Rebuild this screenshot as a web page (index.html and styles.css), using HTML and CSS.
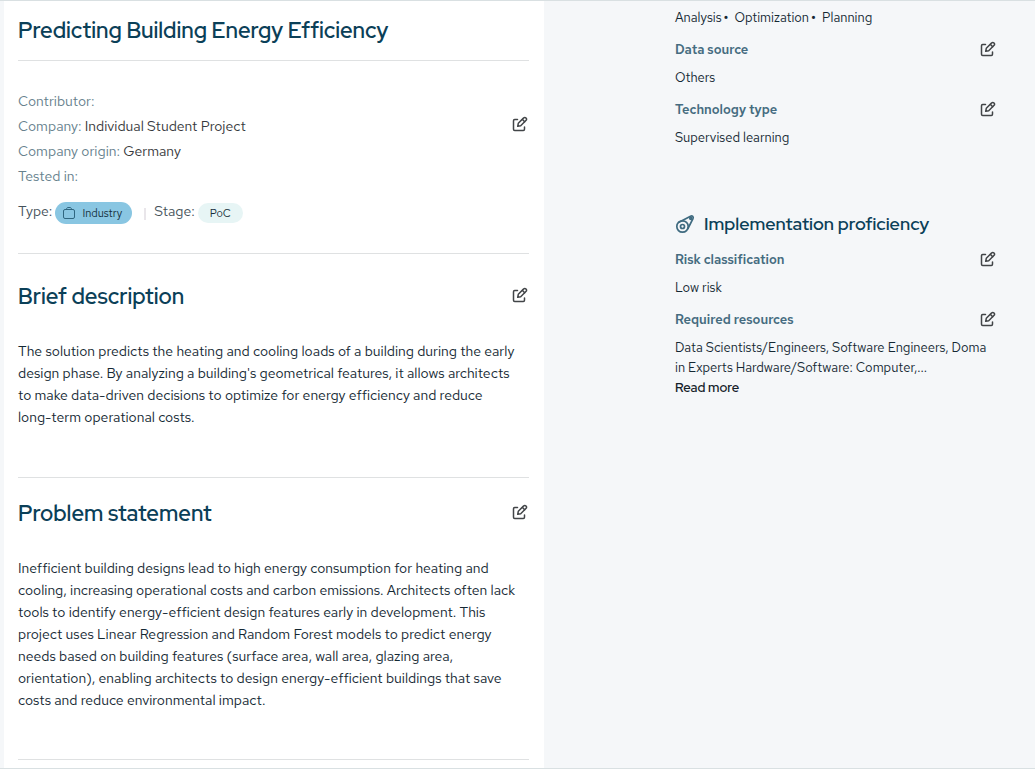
FILE: index.html
```html
<!DOCTYPE html>
<html lang="en">
<head>
<meta charset="utf-8">
<meta name="viewport" content="width=device-width, initial-scale=1">
<title>Predicting Building Energy Efficiency</title>
<link rel="stylesheet" href="styles.css">
</head>
<body>
<svg class="sprite" aria-hidden="true">
  <symbol id="edit" viewBox="0 0 16 16">
    <path d="M5.500 3.500H2.700A1.200 1.200 0 0 0 1.500 4.700v8.600a1.200 1.200 0 0 0 1.200 1.200h8.600a1.200 1.200 0 0 0 1.200-1.200V11"/>
    <path d="M5.700 10.300l.6-3L11.700 1.900a1.500 1.500 0 0 1 2.200 0l.2.2a1.500 1.500 0 0 1 0 2.200L8.700 9.700z"/>
    <path d="M10.500 3.500l2.200 2.200"/>
  </symbol>
</svg>
<div class="page">
  <main class="card">
    <header class="section title-section">
      <h1 class="heading">Predicting Building Energy Efficiency</h1>
    </header>
    <section class="section details">
      <dl class="facts">
        <div><dt>Contributor:</dt><dd></dd></div>
        <div><dt>Company:</dt> <dd>Individual Student Project</dd></div>
        <div><dt>Company origin:</dt> <dd>Germany</dd></div>
        <div><dt>Tested in:</dt><dd></dd></div>
      </dl>
      <button class="edit" type="button" aria-label="Edit details"><svg><use href="#edit"/></svg></button>
      <div class="tags">
        <span class="tag-label">Type:</span>
        <span class="pill industry"><svg class="case" viewBox="0 0 14 14" aria-hidden="true"><rect x="1.500" y="3.500" width="11" height="9" rx="1.500"/><path d="M4.500 3.500c0-2 1-2 2.500-2s2.500 0 2.500 2"/></svg>Industry</span>
        <span class="divider"></span>
        <span class="tag-label">Stage:</span>
        <span class="pill stage">PoC</span>
      </div>
    </section>
    <section class="section prose">
      <div class="bar">
        <h2 class="heading">Brief description</h2>
        <button class="edit" type="button" aria-label="Edit brief description"><svg><use href="#edit"/></svg></button>
      </div>
      <p>The solution predicts the heating and cooling loads of a building during the early<br>design phase. By analyzing a building's geometrical features, it allows architects<br>to make data-driven decisions to optimize for energy efficiency and reduce<br>long-term operational costs.</p>
    </section>
    <section class="section prose problem">
      <div class="bar">
        <h2 class="heading">Problem statement</h2>
        <button class="edit" type="button" aria-label="Edit problem statement"><svg><use href="#edit"/></svg></button>
      </div>
      <p>Inefficient building designs lead to high energy consumption for heating and<br>cooling, increasing operational costs and carbon emissions. Architects often lack<br>tools to identify energy-efficient design features early in development. This<br>project uses Linear Regression and Random Forest models to predict energy<br>needs based on building features (surface area, wall area, glazing area,<br>orientation), enabling architects to design energy-efficient buildings that save<br>costs and reduce environmental impact.</p>
    </section>
  </main>
  <aside class="side">
    <p class="topics"><span>Analysis<b>•</b></span><span>Optimization<b>•</b></span><span>Planning</span></p>
    <section class="field">
      <h3>Data source</h3>
      <button class="edit" type="button" aria-label="Edit data source"><svg><use href="#edit"/></svg></button>
      <p>Others</p>
    </section>
    <section class="field">
      <h3>Technology type</h3>
      <button class="edit" type="button" aria-label="Edit technology type"><svg><use href="#edit"/></svg></button>
      <p>Supervised learning</p>
    </section>
    <h2 class="side-title">
      <svg viewBox="0 0 20 20" aria-hidden="true"><circle cx="7.500" cy="12.500" r="5.700"/><circle cx="7.500" cy="12.500" r="2"/><path d="M3.500 8.400L15.500 2.200c1.800-.8 3.300.7 2.500 2.400L12.700 15"/><circle cx="15.800" cy="4.300" r="1"/></svg>
      Implementation proficiency
    </h2>
    <section class="field">
      <h3>Risk classification</h3>
      <button class="edit" type="button" aria-label="Edit risk classification"><svg><use href="#edit"/></svg></button>
      <p>Low risk</p>
    </section>
    <section class="field">
      <h3>Required resources</h3>
      <button class="edit" type="button" aria-label="Edit required resources"><svg><use href="#edit"/></svg></button>
      <p>Data Scientists/Engineers, Software Engineers, Doma<br>in Experts Hardware/Software: Computer,...</p>
      <button class="more" type="button">Read more</button>
    </section>
  </aside>
</div>
</body>
</html>
```
FILE: styles.css
```css
* { box-sizing: border-box; }
body {
  margin: 0;
  background: #fff;
  color: #142833;
  font: 14px/22px "Red Hat Text", "Red Hat Display", "Open Sans", sans-serif;
}
h1, h2, h3, p, dl, dd { margin: 0; }
button { border: 0; padding: 0; background: none; font: inherit; cursor: pointer; }
.sprite { position: absolute; width: 0; height: 0; }
.page {
  display: grid;
  grid-template-columns: 540fr 491fr;
  padding-left: 4px;
  background: #f5f7f9;
  border-top: 1px solid #d9e0e2;
  border-bottom: 1px solid #d9e0e2;
}
.card { background: #fff; padding: 0 15px 8px 14px; }
.section { border-bottom: 1px solid #dfe1e2; }
.heading {
  font: 600 22px/28px "Red Hat Display", Inter, sans-serif;
  color: #0b4058;
  white-space: nowrap;
}
.title-section { padding: 16px 0 15px; }
.edit { width: 16px; height: 16px; color: #424548; }
.edit svg { display: block; width: 16px; height: 16px; fill: none; stroke: currentColor; stroke-width: 1.500; stroke-linejoin: round; stroke-linecap: round; }
.details {
  display: grid;
  grid-template-columns: 1fr auto;
  align-items: start;
  padding: 28px 1px 29px 0;
}
.details .edit { margin-top: 27px; }
.facts { line-height: 25px; }
.facts dt { display: inline; color: #66818d; }
.facts dd { display: inline; color: #37393c; }
.tags { grid-column: 1 / -1; display: flex; align-items: center; padding-top: 13px; color: #45525a; }
.tag-label { line-height: 18px; padding-bottom: 4px; }
.pill { display: flex; align-items: center; height: 22px; margin-left: 3px; border-radius: 11px; font-size: 11px; color: #142e3a; }
.industry { gap: 6px; padding: 0 10px 0 7px; background: #89c6e2; }
.case { width: 14px; height: 14px; fill: none; stroke: #2f6680; stroke-width: 1; }
.stage { height: 20px; padding: 0 12px; background: #e7f5f5; }
.divider { width: 2px; height: 12px; margin: 2px 8px 0 12px; background: #e9e6ea; }
.bar { display: flex; justify-content: space-between; align-items: start; padding-right: 1px; }
.bar .edit { margin-top: 4px; }
.prose { padding: 29px 0 49px; }
.prose p { padding-top: 29px; white-space: nowrap; }
.problem { padding: 22px 0 48px; }
.side { padding: 7px 39px 0 131px; font-size: 13px; line-height: 20px; white-space: nowrap; }
.topics { display: flex; gap: 6px; }
.topics b { padding-left: 2px; font-weight: 700; }
.field { display: grid; grid-template-columns: 1fr auto; align-items: start; justify-items: start; row-gap: 8px; padding-top: 12px; }
.field .edit { margin-top: 1px; }
.field h3 { font: 600 13px/20px "Red Hat Text", "Red Hat Display", Inter, sans-serif; color: #456c80; }
.field p { grid-column: 1 / -1; }
.side-title {
  display: flex;
  align-items: center;
  gap: 9px;
  padding-top: 64px;
  font: 600 18px/24px "Red Hat Display", Inter, sans-serif;
  color: #0b4058;
}
.side-title svg { width: 20px; height: 20px; fill: none; stroke: #3f6b80; stroke-width: 1.700; }
.side-title + .field { padding-top: 14px; }
.more { margin-top: -8px; font: 600 13px/20px "Red Hat Display", Inter, sans-serif; color: #142129; }
```
